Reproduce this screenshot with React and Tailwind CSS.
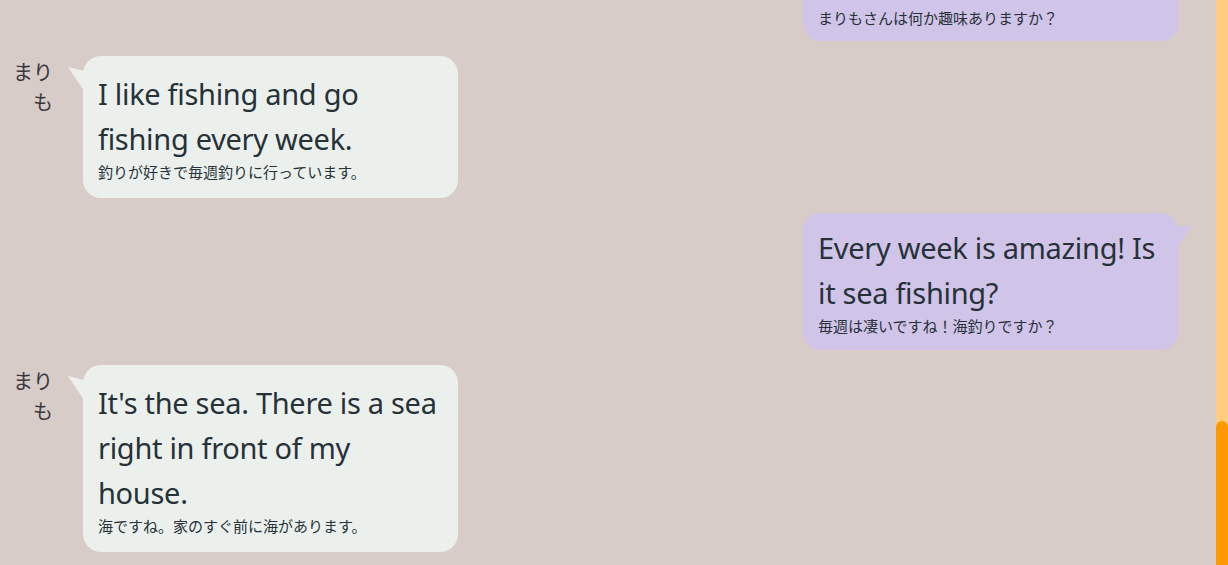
import React from 'react';

const messages = [
  { id: 2, me: false, en: 'I like fishing and go fishing every week.', ja: '釣りが好きで毎週釣りに行っています。' },
  { id: 3, me: true, en: 'Every week is amazing! Is it sea fishing?', ja: '毎週は凄いですね！海釣りですか？' },
  { id: 4, me: false, en: "It's the sea. There is a sea right in front of my house.", ja: '海ですね。家のすぐ前に海があります。' },
];

const en = { fontFamily: '"Noto Sans", "Noto Sans CJK JP", sans-serif' };
const ja = { fontFamily: '"Noto Sans CJK JP", sans-serif' };

function Bubble({ msg }) {
  if (msg.me) {
    return (
      <div className="flex justify-end pr-[38px]">
        <div className="relative w-[375px] rounded-[18px] bg-[#d1c4e9] px-[15px] pt-[12px] pb-[13px] text-[#263238]">
          <div
            className="absolute right-[-13px] top-[12px] h-[24px] w-[14px] bg-[#d1c4e9]"
            style={{ clipPath: 'polygon(0 2px, 100% 0, 0 100%)' }}
          />
          <p className="text-[29px] leading-[45px] tracking-[-0.3px]" style={en}>{msg.en}</p>
          <p className="text-[15px] leading-[22px]" style={ja}>{msg.ja}</p>
        </div>
      </div>
    );
  }
  return (
    <div className="flex items-start pl-[7px]">
      <div className="w-[46px] pt-[1px] text-right text-[20px] leading-[30px] text-[#37373b]" style={ja}>まりも</div>
      <div className="relative ml-[30px] w-[375px] rounded-[18px] bg-[#ecf0ed] px-[15px] py-[15px] text-[#263238]">
        <div
          className="absolute left-[-15px] top-[11px] h-[24px] w-[16px] bg-[#ecf0ed]"
          style={{ clipPath: 'polygon(0 0, 100% 4px, 100% 100%)' }}
        />
        <p className="text-[29px] leading-[45px] tracking-[-0.3px]" style={en}>{msg.en}</p>
        <p className="text-[15px] leading-[22px]" style={ja}>{msg.ja}</p>
      </div>
    </div>
  );
}

export default function App() {
  return (
    <div className="flex h-[565px] w-[1228px] overflow-hidden bg-[#d7ccc8]">
      <div className="flex flex-1 flex-col gap-[15px]">
        {/* partially scrolled-off question */}
        <div className="flex justify-end pr-[38px]">
          <div className="w-[375px] rounded-b-[18px] bg-[#d1c4e9] px-[15px] pt-[7px] pb-[12px] text-[15px] leading-[22px] text-[#263238]" style={ja}>
            まりもさんは何か趣味ありますか？
          </div>
        </div>
        {messages.map(m => <Bubble key={m.id} msg={m} />)}
      </div>
      <div className="flex w-[12px] flex-col bg-[#ffcc80]">
        <div className="h-[421px]" />
        <div className="flex-1 rounded-t-[6px] bg-[#ff9800]" />
      </div>
    </div>
  );
}
